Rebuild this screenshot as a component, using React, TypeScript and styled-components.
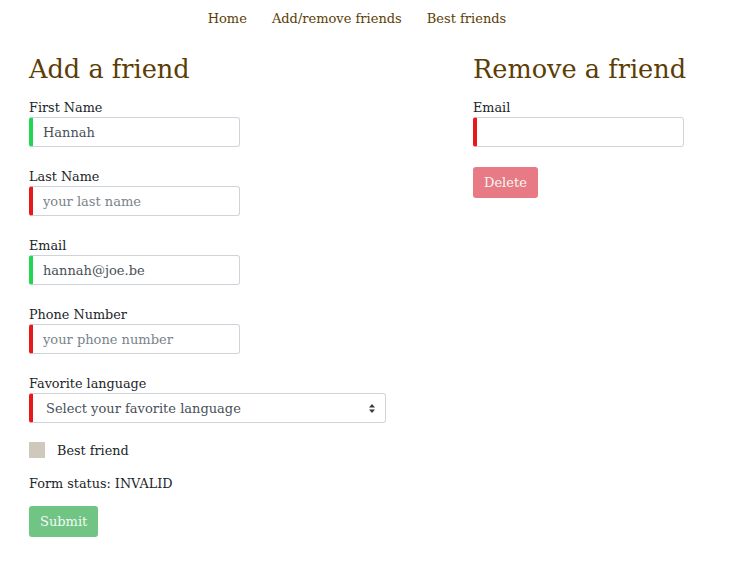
import React from "react";
import styled, { createGlobalStyle } from "styled-components";

const Global = createGlobalStyle`
  html, body { margin: 0; padding: 0; background: #fff; }
  body { font-family: "DejaVu Serif", serif; color: #212529; font-size: 12.8px; }
  * { box-sizing: border-box; }
  input::placeholder { color: #7a838b; opacity: 1; }
`;

const Page = styled.div`
  width: 745px;
  min-height: 562px;
`;

const Nav = styled.nav`
  display: flex;
  justify-content: center;
  gap: 25px;
  padding: 10px 31px 0 0;
  height: 38px;
`;

const NavLink = styled.a`
  color: #5c3d05;
  font-size: 13px;
  line-height: 18px;
  text-decoration: none;
`;

const Columns = styled.div`
  display: grid;
  grid-template-columns: 444px 1fr;
  padding-left: 29px;
`;

const Column = styled.section`
  display: flex;
  flex-direction: column;
`;

const Heading = styled.h2`
  margin: 14px 0 13px;
  font-weight: normal;
  font-size: 25.6px;
  line-height: 34px;
  color: #5c3d05;
`;

const Field = styled.div`
  display: flex;
  flex-direction: column;
  margin-bottom: 21px;
`;

const RemoveField = styled(Field)`
  margin-bottom: 20px;
`;

const Label = styled.label`
  font-size: 12.8px;
  line-height: 18px;
`;

const Input = styled.input<{ $valid: boolean; $w?: number }>`
  width: ${(p) => p.$w ?? 211}px;
  height: 30px;
  border: 1px solid #ced4da;
  border-left: 4px solid ${(p) => (p.$valid ? "#22d653" : "#e8191b")};
  border-radius: 3px;
  padding: 0 10px;
  font-family: "DejaVu Serif", serif;
  font-size: 13px;
  color: #495057;
  outline: none;
`;

const SelectWrap = styled.div`
  position: relative;
  width: 357px;
`;

const Select = styled.select`
  width: 100%;
  height: 30px;
  appearance: none;
  -webkit-appearance: none;
  background: #fff;
  border: 1px solid #ced4da;
  border-left: 4px solid #e8191b;
  border-radius: 3px;
  padding: 0 24px 0 13px;
  font-family: "DejaVu Serif", serif;
  font-size: 13px;
  color: #495057;
  outline: none;
`;

const Arrows = styled.svg`
  position: absolute;
  right: 11px;
  top: 11px;
  pointer-events: none;
`;

const CheckRow = styled.label`
  display: flex;
  align-items: flex-start;
  gap: 12px;
  margin: -3px 0 14px;
  font-size: 12.8px;
  line-height: 20px;
`;

const CheckBox = styled.span`
  width: 16px;
  height: 16px;
  margin-top: 1px;
  background: #cfc9bd;
  display: inline-block;
`;

const Status = styled.p`
  margin: 0 0 13px;
  font-size: 12.8px;
  line-height: 18px;
`;

const Button = styled.button<{ $tone: "green" | "red" }>`
  align-self: flex-start;
  height: 31px;
  padding: 0 11px;
  border: none;
  border-radius: 3px;
  background: ${(p) => (p.$tone === "green" ? "#70c585" : "#e77a85")};
  color: #f4f8f2;
  font-family: "DejaVu Serif", serif;
  font-size: 13px;
  cursor: default;
`;

export default function App() {
  return (
    <Page>
      <Global />
      <Nav>
        <NavLink href="#">Home</NavLink>
        <NavLink href="#">Add/remove friends</NavLink>
        <NavLink href="#">Best friends</NavLink>
      </Nav>
      <Columns>
        <Column>
          <Heading>Add a friend</Heading>
          <Field>
            <Label>First Name</Label>
            <Input $valid defaultValue="Hannah" placeholder="your first name" />
          </Field>
          <Field>
            <Label>Last Name</Label>
            <Input $valid={false} placeholder="your last name" />
          </Field>
          <Field>
            <Label>Email</Label>
            <Input $valid defaultValue="hannah@joe.be" placeholder="your email" />
          </Field>
          <Field>
            <Label>Phone Number</Label>
            <Input $valid={false} placeholder="your phone number" />
          </Field>
          <Field>
            <Label>Favorite language</Label>
            <SelectWrap>
              <Select defaultValue="">
                <option value="">Select your favorite language</option>
                <option value="en">English</option>
                <option value="nl">Dutch</option>
              </Select>
              <Arrows width="6" height="9" viewBox="0 0 6 9">
                <path d="M3 0 L6 3.5 L0 3.5 Z M3 9 L6 5.5 L0 5.5 Z" fill="#343a40" />
              </Arrows>
            </SelectWrap>
          </Field>
          <CheckRow>
            <CheckBox />
            Best friend
          </CheckRow>
          <Status>Form status: INVALID</Status>
          <Button $tone="green">Submit</Button>
        </Column>
        <Column>
          <Heading>Remove a friend</Heading>
          <RemoveField>
            <Label>Email</Label>
            <Input $valid={false} />
          </RemoveField>
          <Button $tone="red">Delete</Button>
        </Column>
      </Columns>
    </Page>
  );
}
